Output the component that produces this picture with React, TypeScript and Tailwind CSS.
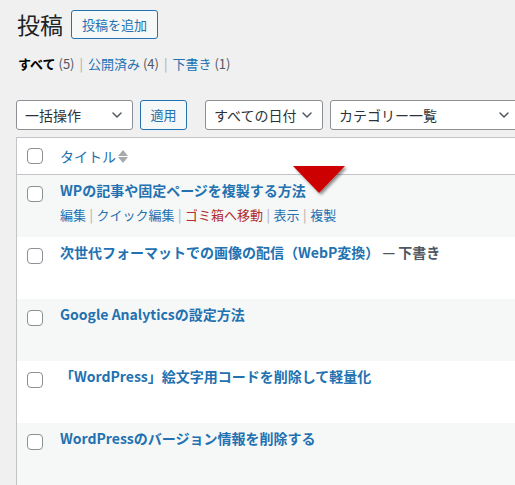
import { ChevronDown } from "lucide-react";

const posts = [
  { title: "WPの記事や固定ページを複製する方法", actions: true },
  { title: "次世代フォーマットでの画像の配信（WebP変換）", draft: true },
  { title: "Google Analyticsの設定方法" },
  { title: "「WordPress」絵文字用コードを削除して軽量化" },
  { title: "WordPressのバージョン情報を削除する" },
];

function Checkbox() {
  return (
    <span className="block h-4 w-4 shrink-0 rounded-[4px] border border-[#8c8f94] bg-white" />
  );
}

function Select({ label, width }: { label: string; width: string }) {
  return (
    <div
      className={`${width} flex h-[30px] shrink-0 items-center justify-between rounded-[3px] border border-[#8c8f94] bg-white pl-2 pr-[7px] text-[14px] text-[#2c3338]`}
    >
      <span>{label}</span>
      <ChevronDown className="h-4 w-4 text-[#50575e]" strokeWidth={2.2} />
    </div>
  );
}

function Sep() {
  return <span className="mx-[5px] text-[#a7aaad]">|</span>;
}

function ActSep() {
  return <span className="mx-[3.5px] text-[#a7aaad]">|</span>;
}

export default function App() {
  return (
    <div
      className="relative h-[485px] w-[515px] overflow-hidden bg-[#f0f0f1] text-[#3c434a]"
      style={{ fontFamily: '"Noto Sans CJK JP", "Noto Sans", sans-serif' }}
    >
      <div className="w-[540px] pl-4">
        {/* heading */}
        <div className="flex items-center gap-[8px] pt-[10px]">
          <h1 className="ml-[1px] text-[23px] leading-[29px] text-[#1d2327]">投稿</h1>
          <button
            type="button"
            className="h-[29px] w-[87px] rounded-[3px] border border-[#2271b1] bg-[#f6f7f7] text-[13px] text-[#2271b1]"
          >
            投稿を追加
          </button>
        </div>

        {/* status filters */}
        <div className="mt-[15px] ml-[2px] text-[13px] leading-[20px] text-[#50575e]">
          <span className="font-bold text-black">すべて</span> (5)
          <Sep />
          <span className="text-[#2271b1]">公開済み</span> (4)
          <Sep />
          <span className="text-[#2271b1]">下書き</span> (1)
        </div>

        {/* bulk actions */}
        <div className="mt-[26px] flex items-center">
          <Select label="一括操作" width="w-[117px]" />
          <button
            type="button"
            className="ml-[7px] h-[30px] w-[47px] rounded-[3px] border border-[#2271b1] bg-[#f6f7f7] text-[13px] text-[#2271b1]"
          >
            適用
          </button>
          <div className="ml-[18px]">
            <Select label="すべての日付" width="w-[118px]" />
          </div>
          <div className="ml-[7px]">
            <Select label="カテゴリー一覧" width="w-[190px]" />
          </div>
        </div>

        {/* table */}
        <div className="mt-[7px] border border-[#c3c4c7] bg-white">
          <div className="flex h-[37px] items-center border-b border-[#c3c4c7] pl-[10px]">
            <Checkbox />
            <span className="ml-[17px] text-[14px] text-[#2271b1]">タイトル</span>
            <span className="ml-[2px] flex flex-col items-center gap-[1px]">
              <span className="block h-0 w-0 border-x-[5px] border-b-[6px] border-x-transparent border-b-[#a7aaad]" />
              <span className="block h-0 w-0 border-x-[5px] border-t-[6px] border-x-transparent border-t-[#a7aaad]" />
            </span>
          </div>
          {posts.map((p, i) => (
            <div
              key={p.title}
              className={`flex h-[62px] items-start pl-[10px] pt-[5px] ${i % 2 === 0 ? "bg-[#f6f7f7]" : "bg-white"}`}
            >
              <div className="mt-[6px]">
                <Checkbox />
              </div>
              <div className="ml-[17px]">
                <div className="text-[14px] leading-[20px] font-semibold text-[#2271b1]">
                  {p.title}
                  {p.draft && (
                    <span className="text-[#50575e]"> — 下書き</span>
                  )}
                </div>
                {p.actions && (
                  <div className="mt-[6px] text-[13px] leading-[18px] text-[#2271b1]">
                    編集
                    <ActSep />
                    クイック編集
                    <ActSep />
                    <span className="text-[#b32d2e]">ゴミ箱へ移動</span>
                    <ActSep />
                    表示
                    <ActSep />
                    複製
                  </div>
                )}
              </div>
            </div>
          ))}
        </div>
      </div>

      {/* red marker */}
      <svg
        className="absolute left-[292px] top-[165px]"
        width="58"
        height="34"
        viewBox="0 0 58 34"
      >
        <defs>
          <filter id="sh" x="-20%" y="-20%" width="150%" height="160%">
            <feDropShadow dx="2" dy="2" stdDeviation="1.5" floodColor="#000" floodOpacity="0.45" />
          </filter>
        </defs>
        <polygon points="1,1 53,1 27,28" fill="#cc0000" filter="url(#sh)" />
      </svg>
    </div>
  );
}
